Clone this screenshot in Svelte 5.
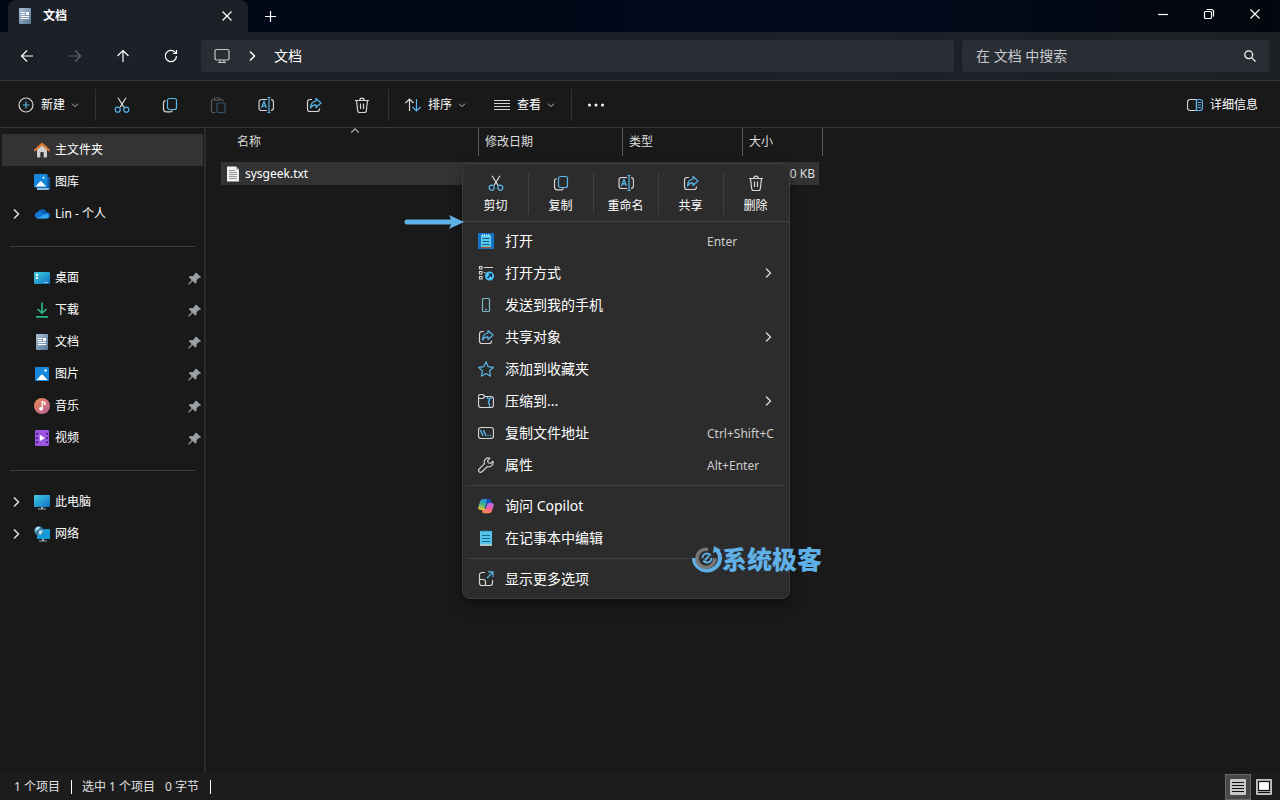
<script lang="ts">
    type NavItem = { icon: string; label: string; expand?: boolean; pin?: boolean; active?: boolean };
    type MenuItem = { icon: string; label: string; keys?: string; sub?: boolean };

    const navGroups: NavItem[][] = [
        [
            { icon: "home", label: "主文件夹", active: true },
            { icon: "gallery", label: "图库" },
            { icon: "cloud", label: "Lin - 个人", expand: true },
        ],
        [
            { icon: "desktop", label: "桌面", pin: true },
            { icon: "download", label: "下载", pin: true },
            { icon: "document", label: "文档", pin: true },
            { icon: "picture", label: "图片", pin: true },
            { icon: "music", label: "音乐", pin: true },
            { icon: "video", label: "视频", pin: true },
        ],
        [
            { icon: "pc", label: "此电脑", expand: true },
            { icon: "network", label: "网络", expand: true },
        ],
    ];

    const tools = [
        { icon: "cut", label: "剪切" },
        { icon: "copy", label: "复制" },
        { icon: "paste", label: "粘贴" },
        { icon: "rename", label: "重命名" },
        { icon: "share", label: "共享" },
        { icon: "trash", label: "删除" },
    ];

    const quickActions = tools.filter((t) => t.icon !== "paste");

    const menuGroups: MenuItem[][] = [
        [
            { icon: "notepadTile", label: "打开", keys: "Enter" },
            { icon: "openWith", label: "打开方式", sub: true },
            { icon: "phone", label: "发送到我的手机" },
            { icon: "share", label: "共享对象", sub: true },
            { icon: "star", label: "添加到收藏夹" },
            { icon: "zip", label: "压缩到...", sub: true },
            { icon: "path", label: "复制文件地址", keys: "Ctrl+Shift+C" },
            { icon: "wrench", label: "属性", keys: "Alt+Enter" },
        ],
        [
            { icon: "copilot", label: "询问 Copilot" },
            { icon: "notepad", label: "在记事本中编辑" },
        ],
        [{ icon: "more", label: "显示更多选项" }],
    ];

    let query = "";
    let view = "details";
</script>

{#snippet icon(name: string)}
    <svg class="icon" viewBox="0 0 16 16" aria-hidden="true">
        {#if name === "document"}
            <defs>
                <linearGradient id="docFill" x1="0" y1="0" x2="1" y2="1">
                    <stop offset="0" stop-color="#adc0d4" />
                    <stop offset="1" stop-color="#587797" />
                </linearGradient>
            </defs>
            <rect x="2" width="12" height="16" rx="1" fill="url(#docFill)" />
            <path d="M4 4.500h4M4 6.500h4M4 8.500h8M4 10.500h8" stroke="#fff" stroke-width="1" />
            <rect x="9" y="4" width="3" height="3" fill="#fff" />
        {:else if name === "home"}
            <path d="M3 7.500L8 3l5 4.500V14.500a1 1 0 0 1-1 1H9.700V11a1 1 0 0 0-1-1H7.300a1 1 0 0 0-1 1v4.500H4a1 1 0 0 1-1-1z" fill="#cfcfcf" />
            <path d="M1 8.200L8 1.700l7 6.500" fill="none" stroke="#e0782c" stroke-width="2.200" stroke-linecap="round" stroke-linejoin="round" />
        {:else if name === "gallery"}
            <path d="M3 3h13v11.500a1.200 1.200 0 0 1-1.200 1.200H3z" fill="#14569c" />
            <path d="M3 14h12v1a1 1 0 0 1-1 1H3z" fill="#8fb8e4" />
            <rect width="13.500" height="13.500" rx="1.200" fill="#1687dc" />
            <path d="M1.500 12.500l4.600-5q.7-.7 1.400 0l4.600 5z" fill="#fff" />
            <circle cx="9.500" cy="3.800" r="1" fill="#fff" />
        {:else if name === "cloud"}
            <path d="M3.500 12.500a3.300 3.300 0 0 1 .3-6.500A5 5 0 0 1 12.800 6.500 3 3 0 0 1 13 12.500z" fill="#1479d4" />
            <path d="M3.500 12.500L12 7.200a3 3 0 0 1 1 5.300z" fill="#35a6ee" />
            <path d="M7.500 6.700l3 2L13 7A5 5 0 0 0 5 4.500z" fill="#0b5fb4" />
        {:else if name === "desktop"}
            <defs>
                <linearGradient id="deskFill" x1="0" y1="0" x2="1" y2="1">
                    <stop offset="0" stop-color="#3fd0e0" />
                    <stop offset="1" stop-color="#0f70c4" />
                </linearGradient>
            </defs>
            <rect y="2" width="16" height="12" rx="1" fill="url(#deskFill)" />
            <path d="M2 4h2v2H2zM2 7h2v2H2zM10.500 12h1v1h-1zM12.500 12h1v1h-1z" fill="#fff" />
        {:else if name === "download"}
            <path d="M8 .5v10.500M3.500 7L8 11.200 12.500 7M2 14.800h12" fill="none" stroke="#2bb489" stroke-width="1.700" />
        {:else if name === "picture"}
            <rect x="1" y="1" width="14" height="14" rx="1" fill="#1687dc" />
            <path d="M2.500 14l4.700-5.200q.8-.7 1.600 0L13.500 14z" fill="#fff" />
            <circle cx="11.500" cy="4.500" r="1.200" fill="#fff" />
        {:else if name === "music"}
            <defs>
                <linearGradient id="musicFill" x1="0" y1="0" x2="1" y2="1">
                    <stop offset="0" stop-color="#f08a55" />
                    <stop offset="1" stop-color="#b0609a" />
                </linearGradient>
            </defs>
            <circle cx="8" cy="8" r="8" fill="url(#musicFill)" />
            <circle cx="7" cy="10.800" r="1.900" fill="#fff" />
            <path d="M8.200 10.800V3.500l2.800 1v2L9.300 6" fill="none" stroke="#fff" stroke-width="1.200" />
        {:else if name === "video"}
            <rect x="1" width="14" height="16" rx="1" fill="#9b55e0" />
            <path d="M2 3h2v1.500H2zM2 7.200h2v1.500H2zM2 11.500h2V13H2zM12 3h2v1.500h-2zM12 7.200h2v1.500h-2zM12 11.500h2V13h-2z" fill="#3d1a78" />
            <path d="M5.800 4.800L11 8l-5.200 3.200z" fill="#fff" />
        {:else if name === "pc"}
            <defs>
                <linearGradient id="pcFill" x1="0" y1="0" x2="1" y2="1">
                    <stop offset="0" stop-color="#3fd0e0" />
                    <stop offset="1" stop-color="#0f70c4" />
                </linearGradient>
            </defs>
            <path d="M7 12h2v2.500h3v1H4v-1h3z" fill="#9aabb5" />
            <rect y="1" width="16" height="12" rx=".8" fill="url(#pcFill)" />
        {:else if name === "network"}
            <path d="M8 12h2v2.500h3v1H5v-1h3z" fill="#9aabb5" />
            <rect x="3" y="3" width="13" height="10" rx=".8" fill="#149bd3" />
            <circle cx="4.800" cy="4.800" r="4.600" fill="#3d7ea6" />
            <path d="M2 2q2-2 4-1L5 3 3 4 1 6zM5 5l3-1 .8 2L6 9 5 8z" fill="#c4e4f3" />
        {:else if name === "cut"}
            <path d="M4 .8L10 10.400M12 .8L6 10.400" stroke="#d6d6d6" fill="none" />
            <circle cx="3.700" cy="12.700" r="2.500" stroke="#58b7ea" fill="none" />
            <circle cx="12.300" cy="12.700" r="2.500" stroke="#58b7ea" fill="none" />
        {:else if name === "copy"}
            <path d="M3.500 3.700A2 2 0 0 0 1.500 6v6a2.800 2.800 0 0 0 2.800 2.800H8.500a2 2 0 0 0 1.900-1.500" stroke="#d6d6d6" fill="none" />
            <rect x="5.500" y="1.500" width="9" height="11" rx="2" stroke="#58b7ea" fill="none" />
        {:else if name === "paste"}
            <path d="M5 2.500H3a1.500 1.500 0 0 0-1.500 1.500v10A1.500 1.500 0 0 0 3 15.500h2.500M10 2.500h1.500A1.500 1.500 0 0 1 13 4v.5" stroke="#5c5c5c" fill="none" />
            <rect x="4.500" y="1" width="5.500" height="2.500" rx="1" stroke="#5c5c5c" fill="none" />
            <rect x="7" y="6" width="8" height="9.500" rx="1.200" stroke="#31566b" fill="none" />
        {:else if name === "rename"}
            <path d="M9 2.500H3.500a2.500 2.500 0 0 0-2.500 2.500v6a2.500 2.500 0 0 0 2.500 2.500H9M13 2.700a2.500 2.500 0 0 1 2.500 2.300v6A2.500 2.500 0 0 1 13 13.300" stroke="#d6d6d6" fill="none" />
            <path d="M3.500 11L6 4.500 8.500 11M4.400 8.800h3.200M9.500 .5h3M9.500 15.500h3M11 .5v15" stroke="#58b7ea" fill="none" />
        {:else if name === "share"}
            <path d="M6 2.500H4A2.500 2.500 0 0 0 1.500 5v7A2.500 2.500 0 0 0 4 14.500h7a2.500 2.500 0 0 0 2.500-2.500v-.5" stroke="#d6d6d6" fill="none" />
            <path d="M10 1.500L15 6l-5 4.500V8Q6.500 7.700 4.500 11 4.700 4.700 10 4z" stroke="#58b7ea" fill="none" stroke-linejoin="round" />
        {:else if name === "trash"}
            <path d="M1 3.500h14M5.800 3.300a2.200 2.200 0 0 1 4.400 0M2.500 3.500l1.200 10.300a1.800 1.800 0 0 0 1.800 1.700h5a1.800 1.800 0 0 0 1.800-1.700L13.500 3.500M6.500 6.500v5.500M9.500 6.500v5.500" stroke="#d6d6d6" fill="none" />
        {:else if name === "new"}
            <circle cx="8" cy="8" r="7" stroke="#d6d6d6" fill="none" />
            <path d="M8 4.500v7M4.500 8h7" stroke="#58b7ea" />
        {:else if name === "sort"}
            <path d="M4.500 14V2M.5 6l4-4 4 4" stroke="#d6d6d6" fill="none" />
            <path d="M11.500 2v12M7.500 10l4 4 4-4" stroke="#58b7ea" fill="none" />
        {:else if name === "lines"}
            <path d="M0 3.500h16M0 6.500h16M0 9.500h16M0 12.500h16" stroke="#d6d6d6" />
        {:else if name === "dots"}
            <path d="M1.500 8h0M8 8h0M14.500 8h0" stroke="#fff" stroke-width="3" stroke-linecap="round" />
        {:else if name === "panel"}
            <path d="M9.500 2.500H3A2.500 2.500 0 0 0 .5 5v6A2.500 2.500 0 0 0 3 13.500h6.500z" stroke="#d6d6d6" fill="none" />
            <path d="M9.500 2.500H13A2.500 2.500 0 0 1 15.500 5v6a2.500 2.500 0 0 1-2.500 2.500H9.500zM11 5.500h3M11 8h3M11 10.500h3" stroke="#58b7ea" fill="none" />
        {:else if name === "notepadTile"}
            <rect width="16" height="16" fill="#1473c4" />
            <rect x="3" y="2" width="10" height="12.500" fill="#5cc9ea" />
            <path d="M3 14.500h10" stroke="#a5502a" />
            <path d="M4.500 1v2M6.500 1v2M8.500 1v2M10.500 1v2" stroke="#c8eefa" stroke-width=".8" />
            <path d="M4.500 5.500h7M4.500 8.500h7M4.500 11.500h7" stroke="#155f8f" />
        {:else if name === "notepad"}
            <rect x="2" y="1" width="12" height="14" fill="#54c5e8" />
            <path d="M2 15.200h12" stroke="#e8e0d5" />
            <path d="M4 0v2M6.500 0v2M9 0v2M11.500 0v2" stroke="#2a7fa8" stroke-width=".8" />
            <path d="M4 5.500h8M4 8.500h8M4 11.500h8" stroke="#176a93" />
        {:else if name === "openWith"}
            <path d="M1.500 1.500h2.500V4H1.500zM1.500 6.500h2.500V9H1.500zM1.500 11.500h2.500V14H1.500zM6 2.500h9M6 7.500h1.500" stroke="#d6d6d6" fill="none" />
            <circle cx="11.500" cy="11" r="4.500" fill="#4cc2ff" />
            <path d="M9.500 13l4-4M10.500 9h3v3" stroke="#0b2b3c" fill="none" />
        {:else if name === "phone"}
            <rect x="4.500" y="1.500" width="7" height="13" rx="1" stroke="#7db8c4" fill="none" />
            <path d="M7 12.500h2" stroke="#7db8c4" />
        {:else if name === "star"}
            <path d="M8 .8l2.200 4.900 5.300.6-4 3.600 1.100 5.300L8 12.500l-4.600 2.700 1.100-5.300-4-3.600 5.300-.6z" stroke="#58b7ea" fill="none" stroke-linejoin="round" />
        {:else if name === "zip"}
            <path d="M.5 5.500H5L7 3.500h6A2.500 2.500 0 0 1 15.500 6v6a2.500 2.500 0 0 1-2.500 2.500H3A2.500 2.500 0 0 1 .5 12V4A2 2 0 0 1 2.500 1.500h2.500L7 3.500" stroke="#d6d6d6" fill="none" />
            <path d="M9.500 4v1.500h2V8h-1v2.500h1V14M13 4v1.500h-1.500" stroke="#58b7ea" fill="none" />
        {:else if name === "path"}
            <rect x=".5" y="2.500" width="15" height="11" rx="2.500" stroke="#d6d6d6" fill="none" />
            <path d="M2.500 5l2.500 6M5.500 5L8 11M9.500 10.500h1M12 10.500h1" stroke="#58b7ea" stroke-width="1.400" />
        {:else if name === "wrench"}
            <path d="M14.900 4.300l-2.400 2.200-2.200-.8-.7-2 2.400-2.500A4.200 4.200 0 0 0 6.500 6.600L1.200 12a1.900 1.900 0 0 0 2.700 2.800L9.400 9.500A4.200 4.200 0 0 0 14.900 4.300z" stroke="#cfcfcf" fill="none" stroke-linejoin="round" />
        {:else if name === "copilot"}
            <defs>
                <linearGradient id="pilotLeft" x1="0.500" y1="0" x2="0.300" y2="1">
                    <stop offset="0" stop-color="#1b8be8" />
                    <stop offset=".5" stop-color="#3fb98a" />
                    <stop offset="1" stop-color="#f3c02f" />
                </linearGradient>
                <linearGradient id="pilotRight" x1="0.600" y1="0" x2="0.400" y2="1">
                    <stop offset="0" stop-color="#b36af0" />
                    <stop offset=".5" stop-color="#f0609a" />
                    <stop offset="1" stop-color="#ff8d4a" />
                </linearGradient>
            </defs>
            <path d="M4.500 1H11a2 2 0 0 1 1.800 1.500L13.500 5H10L7.500 12H2.500A2.300 2.300 0 0 1 .3 9L2.300 3A3 3 0 0 1 4.500 1z" fill="url(#pilotLeft)" />
            <path d="M9 1h2a2 2 0 0 1 1.800 1.500L13.500 5H10L7.500 11 6.500 11z" fill="#1a4fb9" />
            <path d="M10.500 5h3a2.300 2.300 0 0 1 2.200 3l-2 5.500a3 3 0 0 1-2.700 1.700H6A2 2 0 0 1 4.200 13L4 12h2.500a1 1 0 0 0 1-.8L9.500 6a1.300 1.300 0 0 1 1-1z" fill="url(#pilotRight)" />
        {:else if name === "more"}
            <path d="M7 1.500H4A2.500 2.500 0 0 0 1.500 4v8A2.500 2.500 0 0 0 4 14.500h8a2.500 2.500 0 0 0 2.500-2.500V9M1.500 8.500H5A2.500 2.500 0 0 1 7.500 11v3.500" stroke="#d6d6d6" fill="none" />
            <path d="M9 7l6-6M10 .9h5v5" stroke="#58b7ea" fill="none" />
        {:else if name === "pin"}
            <path d="M10 2.500L15 7l-1 1-.8-.2-2.700 2.500.2 2.300-1.200 1.200L6.800 11 3 14.500l-.8.100.1-.8L5.700 10 2.800 7.300 4 6.100l2.500.2L9 4 8.900 3.500z" fill="#9aa0a6" />
        {:else if name === "monitor"}
            <path d="M2.500 1.500h11a1.500 1.500 0 0 1 1.500 1.500v7.500a1.500 1.500 0 0 1-1.500 1.500h-11A1.500 1.500 0 0 1 1 10.500V3a1.500 1.500 0 0 1 1.500-1.500zM6 12v2.500M10 12v2.500M4 14.500h8" stroke="#c5c8cc" fill="none" />
        {:else if name === "back"}
            <path d="M14 8H2.500M8 2.500L2.500 8 8 13.500" stroke="currentColor" fill="none" />
        {:else if name === "forward"}
            <path d="M2 8h11.500M8 2.500L13.500 8 8 13.500" stroke="currentColor" fill="none" />
        {:else if name === "up"}
            <path d="M8 14V2.500M2.500 8L8 2.500 13.500 8" stroke="currentColor" fill="none" />
        {:else if name === "reload"}
            <path d="M13.500 8A5.600 5.600 0 1 1 12 4.200L13.300 5.500M13.500 2v3.500H10" stroke="currentColor" fill="none" />
        {:else if name === "search"}
            <circle cx="6.700" cy="6.700" r="3.900" stroke="currentColor" fill="none" />
            <path d="M9.700 9.700L13.500 13.500" stroke="currentColor" />
        {:else if name === "close"}
            <path d="M3.500 3.500l9 9M12.500 3.500l-9 9" stroke="currentColor" />
        {:else if name === "plus"}
            <path d="M8.500 3v11M3 8.500h11" stroke="currentColor" />
        {:else if name === "minimize"}
            <path d="M3 8.500h10" stroke="currentColor" />
        {:else if name === "restore"}
            <rect x="3.500" y="5.500" width="7" height="7" rx="1" stroke="currentColor" fill="none" />
            <path d="M5.500 3.500h5a2 2 0 0 1 2 2v5" stroke="currentColor" fill="none" />
        {:else if name === "textFile"}
            <path d="M2 .5h9L14 3.500v12H2z" fill="#f2f2f2" />
            <path d="M11 .5V3.500h3z" fill="#a9a9a9" />
            <path d="M4 4.500h6M4 6.500h8M4 8.500h8M4 10.500h8M4 12.500h8" stroke="#8b8b8b" stroke-width=".9" />
        {:else if name === "listView"}
            <rect width="16" height="16" rx="1" fill="#c8c8c8" />
            <path d="M2 3.500h12M2 6.500h12M2 9.500h12M2 12.500h12" stroke="#111" />
        {:else if name === "tileView"}
            <rect width="16" height="16" rx="1" fill="#c0c0c0" />
            <rect x="2.500" y="2.500" width="11" height="9" fill="#fff" stroke="#111" />
            <path d="M2 13.500h12" stroke="#111" />
        {/if}
    </svg>
{/snippet}

{#snippet chevron(dir: string)}
    <svg class="chevron {dir}" viewBox="0 0 12 12" aria-hidden="true">
        <path d="M4 1.500L8.500 6 4 10.500" fill="none" stroke="currentColor" />
    </svg>
{/snippet}

<div class="explorer">
    <header class="titlebar">
        <div class="tab">
            {@render icon("document")}
            <span class="tab-title">文档</span>
            <button class="plain" aria-label="关闭标签页">{@render icon("close")}</button>
        </div>
        <button class="plain new-tab" aria-label="新标签页">{@render icon("plus")}</button>
        <div class="window-buttons">
            <button class="plain" aria-label="最小化">{@render icon("minimize")}</button>
            <button class="plain" aria-label="还原">{@render icon("restore")}</button>
            <button class="plain" aria-label="关闭">{@render icon("close")}</button>
        </div>
    </header>

    <nav class="address-row">
        <div class="history">
            <button class="plain" aria-label="后退">{@render icon("back")}</button>
            <button class="plain" aria-label="前进" disabled>{@render icon("forward")}</button>
            <button class="plain" aria-label="向上">{@render icon("up")}</button>
            <button class="plain" aria-label="刷新">{@render icon("reload")}</button>
        </div>
        <div class="address">
            {@render icon("monitor")}
            {@render chevron("right")}
            <button class="crumb">文档</button>
        </div>
        <div class="search">
            <input type="text" aria-label="搜索" placeholder="在 文档 中搜索" bind:value={query} />
            {@render icon("search")}
        </div>
    </nav>

    <div class="toolbar">
        <button class="tool-label new">{@render icon("new")}<span>新建</span>{@render chevron("down")}</button>
        <div class="tool-icons">
            {#each tools as tool}
                <button class="plain" aria-label={tool.label} disabled={tool.icon === "paste"}>{@render icon(tool.icon)}</button>
            {/each}
        </div>
        <div class="tool-views">
            <button class="tool-label">{@render icon("sort")}<span>排序</span>{@render chevron("down")}</button>
            <button class="tool-label">{@render icon("lines")}<span>查看</span>{@render chevron("down")}</button>
        </div>
        <button class="plain overflow" aria-label="更多">{@render icon("dots")}</button>
        <button class="tool-label details">{@render icon("panel")}<span>详细信息</span></button>
    </div>

    <div class="body">
        <aside class="sidebar">
            {#each navGroups as group}
                <ul>
                    {#each group as item}
                        <li>
                            <button class="nav-item" class:active={item.active}>
                                <span class="expander">
                                    {#if item.expand}{@render chevron("right")}{/if}
                                </span>
                                {@render icon(item.icon)}
                                <span>{item.label}</span>
                                {#if item.pin}<span class="pin">{@render icon("pin")}</span>{/if}
                            </button>
                        </li>
                    {/each}
                </ul>
            {/each}
        </aside>

        <main class="files">
            <table>
                <thead>
                    <tr>
                        <th class="name">名称<span class="sort-mark">{@render chevron("up")}</span></th>
                        <th class="date">修改日期</th>
                        <th class="type">类型</th>
                        <th class="size">大小</th>
                    </tr>
                </thead>
                <tbody>
                    <tr>
                        <td><span class="file">{@render icon("textFile")}sysgeek.txt</span></td>
                        <td></td>
                        <td></td>
                        <td class="file-size">0 KB</td>
                    </tr>
                </tbody>
            </table>
        </main>
    </div>

    <footer class="statusbar">
        <span class="status-part">1 个项目</span>
        <span class="status-part selection"><span>选中 1 个项目</span><span>0 字节</span></span>
        <div class="view-switch">
            <button class="plain" class:on={view === "details"} aria-label="详细信息视图" on:click={() => (view = "details")}>
                {@render icon("listView")}
            </button>
            <button class="plain" class:on={view === "tiles"} aria-label="缩略图视图" on:click={() => (view = "tiles")}>
                {@render icon("tileView")}
            </button>
        </div>
    </footer>

    <div class="menu" role="menu">
        <div class="quick">
            {#each quickActions as action}
                <button role="menuitem">{@render icon(action.icon)}<span>{action.label}</span></button>
            {/each}
        </div>
        {#each menuGroups as group}
            <div class="menu-group">
                {#each group as item}
                    <button class="menu-item" role="menuitem">
                        {@render icon(item.icon)}
                        <span>{item.label}</span>
                        {#if item.keys}<kbd>{item.keys}</kbd>{/if}
                        {#if item.sub}<span class="sub">{@render chevron("right")}</span>{/if}
                    </button>
                {/each}
            </div>
        {/each}
    </div>

    <svg class="arrow" viewBox="0 0 60 16" aria-hidden="true">
        <path d="M3 8h46" stroke="#5fb0e6" stroke-width="5" stroke-linecap="round" />
        <path d="M45 1l15 7-15 7 3-7z" fill="#5fb0e6" />
    </svg>

    <div class="watermark">
        <svg viewBox="0 0 30 30" aria-hidden="true">
            <path d="M2 14a13 12.500 0 0 0 26 0q0-5-4-8.500" fill="none" stroke="#5fb0e6" stroke-width="4" />
            <path d="M21 9l1-7 7 4z" fill="#5fb0e6" />
            <path d="M16 5.500a9 9 0 1 0 7 9" fill="none" stroke="#77777a" stroke-width="3.500" />
            <circle cx="15" cy="14" r="4.500" fill="none" stroke="#5fb0e6" stroke-width="2" stroke-dasharray="11 3" />
            <path d="M13 16l4-4" stroke="#5fb0e6" stroke-width="2" />
        </svg>
        <span>系统极客</span>
    </div>
</div>

<style>
    :global(body) {
        background: #191919;
    }
    .explorer {
        position: relative;
        display: flex;
        flex-direction: column;
        min-height: 100vh;
        background: #191919;
        color: #fff;
        font: 12px/16px "Noto Sans", "Noto Sans CJK SC", sans-serif;
    }
    button {
        display: flex;
        align-items: center;
        padding: 0;
        border: 0;
        background: none;
        color: inherit;
        font: inherit;
        text-align: left;
        white-space: nowrap;
    }
    .plain {
        justify-content: center;
    }
    .icon {
        flex: none;
        display: block;
        width: 16px;
        height: 16px;
        stroke-width: 1.2;
    }
    .chevron {
        flex: none;
        display: block;
        width: 12px;
        height: 12px;
        stroke-width: 1.5;
    }
    .chevron.down {
        width: 8px;
        height: 8px;
        transform: rotate(90deg);
        color: #bbb;
    }
    .chevron.up {
        width: 10px;
        height: 10px;
        transform: rotate(-90deg);
        color: #bbb;
    }

    /* title bar */
    .titlebar {
        display: flex;
        height: 32px;
        padding-left: 8px;
        background: linear-gradient(90deg, #010613, #010a1c 70%, #03060c);
    }
    .tab {
        display: flex;
        align-items: center;
        gap: 10px;
        width: 222px;
        padding: 0 9px;
        border-radius: 8px 8px 0 0;
        background: #1c2027;
    }
    .tab-title {
        flex: 1;
        font-weight: 700;
    }
    .tab button {
        width: 24px;
        height: 24px;
    }
    .new-tab {
        width: 44px;
    }
    .window-buttons {
        display: flex;
        margin-left: auto;
        padding-bottom: 4px;
        padding-right: 2px;
    }
    .window-buttons button {
        width: 46px;
    }

    /* address row */
    .address-row {
        display: flex;
        gap: 8px;
        padding: 8px 11px 8px 3px;
        border-bottom: 1px solid #383838;
        background: linear-gradient(90deg, #1c2027, #1b202b 60%, #1e2123);
    }
    .history {
        display: flex;
        width: 190px;
    }
    .history button {
        width: 48px;
        flex: none;
    }
    .history button:disabled {
        color: #62666c;
    }
    .address,
    .search {
        display: flex;
        align-items: center;
        height: 32px;
        border-radius: 4px;
        background: #292d34;
    }
    .address {
        flex: 1;
        gap: 16px;
        padding-left: 13px;
    }
    .crumb {
        font-size: 14px;
    }
    .search {
        width: 307px;
        padding: 0 11px 0 14px;
        box-sizing: border-box;
    }
    .search input {
        flex: 1;
        min-width: 0;
        padding: 0;
        border: 0;
        outline: 0;
        background: none;
        color: #fff;
        font: inherit;
        font-size: 14px;
    }
    .search input::placeholder {
        color: #c9cbce;
    }

    /* command bar */
    .toolbar {
        display: flex;
        align-items: center;
        height: 44px;
        padding: 2px 16px 0;
        border-bottom: 1px solid #383838;
    }
    .tool-label {
        gap: 7px;
        height: 32px;
    }
    .tool-label .chevron {
        margin-left: -1px;
    }
    .new {
        padding: 0 16px 0 2px;
        border-right: 1px solid #333;
    }
    .tool-icons {
        display: flex;
        padding: 0 2px;
        border-right: 1px solid #333;
    }
    .tool-icons button {
        width: 48px;
        height: 32px;
    }
    .tool-views {
        display: flex;
        gap: 28px;
        padding: 0 16px;
        border-right: 1px solid #333;
    }
    .overflow {
        width: 48px;
    }
    .details {
        margin-left: auto;
        padding-right: 6px;
    }

    /* navigation pane */
    .body {
        display: flex;
        flex: 1;
    }
    .sidebar {
        width: 204px;
        padding-top: 6px;
        border-right: 2px solid #2b2b2b;
    }
    ul {
        margin: 0;
        padding: 0;
        list-style: none;
    }
    ul + ul::before {
        content: "";
        display: block;
        height: 1px;
        margin: 16px 9px 15px 10px;
        background: #3d3d3d;
    }
    .nav-item {
        gap: 5px;
        width: 201px;
        height: 32px;
        margin-left: 2px;
        padding: 0 1px 0 8px;
    }
    .nav-item.active {
        background: #333;
    }
    .expander {
        width: 19px;
        color: #ddd;
    }
    .pin {
        margin-left: auto;
    }

    /* file list */
    .files {
        flex: 1;
        padding-left: 15px;
    }
    table {
        border-spacing: 0;
        table-layout: fixed;
        width: 602px;
    }
    th {
        height: 28px;
        padding: 0 0 0 6px;
        box-sizing: border-box;
        border-right: 1px solid #5a5a5a;
        color: #dedede;
        font-weight: 400;
        text-align: left;
    }
    th.name {
        position: relative;
        width: 258px;
        padding-left: 16px;
    }
    .sort-mark {
        position: absolute;
        top: -2px;
        left: 50%;
    }
    .date {
        width: 144px;
    }
    .type {
        width: 120px;
    }
    tbody::before {
        content: "";
        display: block;
        height: 6px;
    }
    td {
        height: 23px;
        padding: 0;
        background: #333;
        background-clip: padding-box;
    }
    .file {
        display: flex;
        align-items: center;
        gap: 4px;
        padding-left: 4px;
    }
    .file-size {
        padding-right: 4px;
        border-right: 4px solid transparent;
        color: #dedede;
        text-align: right;
    }

    /* status bar */
    .statusbar {
        display: flex;
        align-items: center;
        height: 27px;
        padding: 0 3px 0 14px;
        background: #1c1c1c;
        color: #e0e0e0;
    }
    .status-part {
        padding-right: 11px;
        margin-right: 10px;
        border-right: 1px solid #fff;
        line-height: 14px;
    }
    .selection {
        display: flex;
        gap: 10px;
    }
    .view-switch {
        display: flex;
        margin-left: auto;
    }
    .view-switch button {
        width: 26px;
        height: 26px;
        border: 1px solid transparent;
    }
    .view-switch .on {
        border-color: #666;
        background: #484848;
    }

    /* context menu */
    .menu {
        position: absolute;
        top: 163px;
        left: 462px;
        width: 326px;
        padding-bottom: 3px;
        border: 1px solid #3c3c3c;
        border-radius: 8px;
        background: #2c2c2c;
        box-shadow: 0 6px 12px rgba(0, 0, 0, 0.35);
    }
    .quick {
        display: flex;
        height: 57px;
        margin-bottom: 3px;
        border-bottom: 1px solid #404040;
    }
    .quick button {
        flex-direction: column;
        gap: 7px;
        width: 65px;
        height: 39px;
        margin-top: 9px;
        padding-top: 2px;
        box-sizing: content-box;
    }
    .quick button + button {
        box-shadow: inset 1px 0 #404040;
    }
    .menu-group + .menu-group::before {
        content: "";
        display: block;
        height: 1px;
        margin: 4px 3px;
        background: #404040;
    }
    .menu-item {
        display: grid;
        grid-template-columns: 16px 1fr 67px;
        gap: 11px;
        width: 100%;
        height: 32px;
        padding: 0 15px;
        font-size: 14px;
    }
    kbd {
        padding-top: 2px;
        color: #ccc;
        font: inherit;
        font-size: 12px;
    }
    .sub {
        justify-self: end;
        color: #ccc;
    }

    /* overlay marks */
    .arrow {
        position: absolute;
        top: 214px;
        left: 404px;
        width: 60px;
        height: 16px;
    }
    .watermark {
        position: absolute;
        top: 544px;
        left: 692px;
        display: flex;
        align-items: center;
        color: #5fb0e6;
        font-size: 25px;
        font-weight: 900;
        line-height: 30px;
    }
    .watermark svg {
        width: 30px;
        height: 30px;
    }
</style>
